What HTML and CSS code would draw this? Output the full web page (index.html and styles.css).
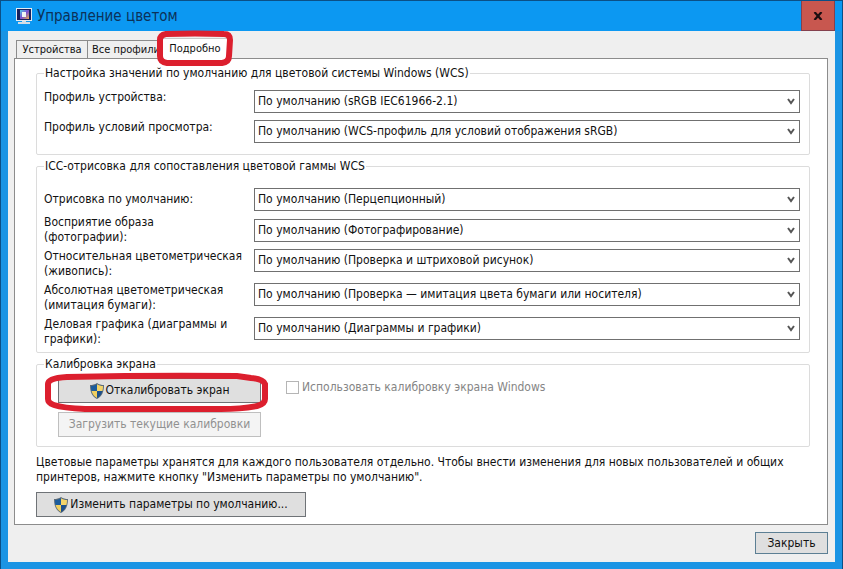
FILE: index.html
```html
<!DOCTYPE html>
<html lang="ru">
<head>
  <meta charset="UTF-8" />
  <title>Управление цветом</title>
  <meta name="viewport" content="width=device-width, initial-scale=1.0" />
  <link rel="stylesheet" href="styles.css">
</head>
<body>
  <!-- shield used by the admin buttons -->
  <svg class="defs" width="0" height="0" aria-hidden="true">
    <symbol id="shield" viewBox="0 0 14 16">
      <path d="M7 0C5 1.500 2.500 2 0 2c0 7 2 11.500 7 14 5-2.500 7-7 7-14-2.500 0-5-.5-7-2z" fill="#5b6b78"/>
      <path d="M7 1.200C5.200 2.400 3.200 2.900 1 3c0 2 .2 3.600.6 5H7z" fill="#1c5c9c"/>
      <path d="M7 1.200C8.800 2.400 10.800 2.900 13 3c0 2-.2 3.600-.6 5H7z" fill="#f3d469"/>
      <path d="M1.600 8c.9 3.300 2.600 5.500 5.400 7V8z" fill="#f0cf60"/>
      <path d="M12.400 8c-.9 3.300-2.600 5.500-5.400 7V8z" fill="#1b4f8c"/>
    </symbol>
  </svg>

  <div class="window">
    <header class="titlebar">
      <svg class="app-icon" width="16" height="16" viewBox="0 0 16 16" aria-hidden="true">
        <defs>
          <linearGradient id="screen" x1="0" y1="0" x2="1" y2="1">
            <stop offset="0" stop-color="#4fd0e8"/>
            <stop offset=".5" stop-color="#7a4fd0"/>
            <stop offset="1" stop-color="#e8b04a"/>
          </linearGradient>
        </defs>
        <rect x="0" y="0" width="16" height="13" fill="#e4eaf0"/>
        <rect x="1" y="1" width="14" height="11" fill="#17205c"/>
        <rect x="4" y="2" width="9" height="9" fill="url(#screen)"/>
        <rect x="6" y="4" width="4" height="5" fill="#eef6f4"/>
        <path d="M6 13h4v1h4v2H2v-2h4z" fill="#d3dde6"/>
      </svg>
      <h1 class="title">Управление цветом</h1>
      <button class="close-btn" type="button" aria-label="Закрыть окно">
        <svg width="10" height="8" viewBox="0 0 10 8"><path d="M1.500 0l7 8M8.500 0l-7 8" stroke="#1a0d10" stroke-width="2.200"/></svg>
      </button>
    </header>

    <main class="client">
      <div class="tabs" role="tablist">
        <button class="tab" type="button" role="tab">Устройства</button>
        <button class="tab tab-all" type="button" role="tab">Все профили</button>
        <div class="tab-mark">
          <button class="tab active" type="button" role="tab" aria-selected="true">Подробно</button>
          <svg class="ring" viewBox="0 0 76 35" preserveAspectRatio="none" aria-hidden="true">
            <path d="M9 3 Q38 2 67 3 Q73 3 73 9 L72 25 Q72 31 65 32 L10 32 Q3 31 3 25 L3 9 Q3 4 9 3z"/>
          </svg>
        </div>
      </div>

      <div class="panel">
        <fieldset class="group group-wcs">
          <legend>Настройка значений по умолчанию для цветовой системы Windows (WCS)</legend>
          <div class="row">
            <label for="device">Профиль устройства:</label>
            <select id="device"><option>По умолчанию (sRGB IEC61966-2.1)</option></select>
          </div>
          <div class="row">
            <label for="viewing">Профиль условий просмотра:</label>
            <select id="viewing"><option>По умолчанию (WCS-профиль для условий отображения sRGB)</option></select>
          </div>
        </fieldset>

        <fieldset class="group group-icc">
          <legend>ICC-отрисовка для сопоставления цветовой гаммы WCS</legend>
          <div class="row centered">
            <label for="default">Отрисовка по умолчанию:</label>
            <select id="default"><option>По умолчанию (Перцепционный)</option></select>
          </div>
          <div class="row centered">
            <label for="photo">Восприятие образа<br>(фотографии):</label>
            <select id="photo"><option>По умолчанию (Фотографирование)</option></select>
          </div>
          <div class="row">
            <label for="relative">Относительная цветометрическая<br>(живопись):</label>
            <select id="relative"><option>По умолчанию (Проверка и штриховой рисунок)</option></select>
          </div>
          <div class="row">
            <label for="absolute">Абсолютная цветометрическая<br>(имитация бумаги):</label>
            <select id="absolute"><option>По умолчанию (Проверка — имитация цвета бумаги или носителя)</option></select>
          </div>
          <div class="row">
            <label for="business">Деловая графика (диаграммы и<br>графики):</label>
            <select id="business"><option>По умолчанию (Диаграммы и графики)</option></select>
          </div>
        </fieldset>

        <fieldset class="group group-calibration">
          <legend>Калибровка экрана</legend>
          <div class="calibration">
            <div class="calibration-buttons">
              <div class="calibrate-mark">
                <button class="btn" type="button"><svg class="shield"><use href="#shield"/></svg>Откалибровать экран</button>
                <svg class="ring" viewBox="0 0 224 39" preserveAspectRatio="none" aria-hidden="true">
                  <path d="M22 4 Q110 2 192 3 L206 5 Q218 6 220 11 L220 26 Q220 31 212 33 Q196 36 176 36 L40 36 Q18 35 9 32 Q3 30 3 26 L3 11 Q3 5 22 4z"/>
                </svg>
              </div>
              <button class="btn" type="button" disabled>Загрузить текущие калибровки</button>
            </div>
            <label class="check"><input type="checkbox" disabled>Использовать калибровку экрана Windows</label>
          </div>
        </fieldset>

        <p class="note">Цветовые параметры хранятся для каждого пользователя отдельно. Чтобы внести изменения для новых пользователей и общих принтеров, нажмите кнопку "Изменить параметры по умолчанию".</p>
        <button class="btn btn-defaults" type="button"><svg class="shield"><use href="#shield"/></svg>Изменить параметры по умолчанию...</button>
      </div>

      <footer class="footer">
        <button class="btn btn-close" type="button">Закрыть</button>
      </footer>
    </main>
  </div>
</body>
</html>
```

FILE: styles.css
```css
* { box-sizing: border-box; }
body {
  margin: 0;
  background-color: #1a94e4;
  color: #111;
  font-family: "DejaVu Sans Condensed", "Noto Sans", sans-serif;
  font-size: 12px;
  line-height: 15px;
}
button, select, input { font: inherit; color: inherit; margin: 0; }
.defs { position: absolute; }

.window {
  display: flex;
  flex-direction: column;
  min-height: 100vh;
  padding: 0 7px 7px;
  border: 1px solid #0b4f86;
  background-color: #1a94e4;
}

/* title bar */
.titlebar {
  display: flex;
  align-items: center;
  height: 30px;
  margin: 0 -7px;
  padding: 0 7px 0 15px;
  background-color: #0c98f2;
}
.app-icon { flex: none; }
.title {
  flex: 1;
  margin: 0 0 0 5px;
  font-size: 15px;
  line-height: 20px;
  font-weight: normal;
  color: #0c3158;
}
.close-btn {
  display: flex;
  align-items: center;
  justify-content: center;
  align-self: stretch;
  width: 34px;
  padding: 0;
  border: 1px solid #84404e;
  border-top: none;
  background-color: #c8574f;
}

.client {
  flex: 1;
  display: flex;
  flex-direction: column;
  padding: 7px 7px 8px 6px;
  background-color: #efefef;
}

/* tabs */
.tabs {
  display: flex;
  align-items: flex-end;
  padding-left: 2px;
}
.tab {
  height: 18px;
  min-width: 72px;
  padding: 0 4px;
  border: 1px solid #8c8c8c;
  border-bottom: none;
  background-color: #efefef;
  font-size: 11px;
  white-space: nowrap;
}
.tab-all { border-left: none; padding: 0 4px; }
.tab-mark {
  position: relative;
  z-index: 1;
  margin: 0 0 -1px -4px;
}
.tab.active {
  display: block;
  height: 21px;
  min-width: 68px;
  padding: 0 4px 2px;
  border-color: #c8c8c8;
  background-color: #fff;
}
.ring {
  position: absolute;
  fill: none;
  stroke: #dc1f2e;
  stroke-width: 6px;
  pointer-events: none;
  overflow: visible;
}
.tab-mark .ring { left: -4px; top: -7px; width: 76px; height: 35px; }
.calibrate-mark .ring { left: -13px; top: -5px; width: 224px; height: 39px; }

.panel {
  flex: 1;
  padding: 7px 17px 7px 21px;
  border: 1px solid #8c8c8c;
  background-color: #fff;
}

/* groups */
.group {
  min-width: 0;
  margin: 0 0 4px;
  padding: 9px 9px 11px 7px;
  border: 1px solid #dcdcdc;
  border-radius: 2px;
}
.group legend { padding: 0 1px; }
.group-icc { padding-top: 14px; padding-bottom: 5px; }
.group-calibration { padding-top: 6px; padding-bottom: 9px; margin-bottom: 8px; }

.row {
  display: grid;
  grid-template-columns: 200px 1fr;
  column-gap: 10px;
  align-items: start;
}
.row label { white-space: nowrap; }
.row + .row { margin-top: 4px; }
.row.centered { align-items: center; }
.group-wcs .row + .row { margin-top: 7px; }

select {
  appearance: none;
  width: 100%;
  height: 23px;
  padding: 0 20px 0 3px;
  border: 1px solid #707070;
  border-radius: 0;
  background: #fff url("data:image/svg+xml,%3Csvg xmlns='http://www.w3.org/2000/svg' width='8' height='7'%3E%3Cpath d='M1 1l3 4 3-4' fill='none' stroke='%23555' stroke-width='2'/%3E%3C/svg%3E") no-repeat right 4px center;
}

/* calibration */
.calibration {
  display: flex;
  align-items: flex-start;
  gap: 25px;
  padding-left: 14px;
}
.calibration-buttons {
  display: flex;
  flex-direction: column;
  gap: 9px;
  width: 203px;
}
.calibrate-mark { position: relative; }
.btn {
  display: flex;
  align-items: center;
  justify-content: center;
  width: 100%;
  height: 25px;
  padding: 0;
  border: 1px solid #6f7377;
  background-color: #dfdfdf;
  white-space: nowrap;
}
.btn:disabled {
  border-color: #bfbfbf;
  background-color: #f4f4f4;
  color: #919191;
}
.shield { flex: none; width: 14px; height: 16px; margin-right: 2px; }
.check {
  display: flex;
  align-items: center;
  gap: 3px;
  padding-top: 2px;
  color: #858585;
}
.check input {
  appearance: none;
  width: 13px;
  height: 13px;
  border: 1px solid #b5b5b5;
  background-color: #fff;
}

.note { margin: 0 0 7px; max-width: 770px; }
.btn-defaults { width: 270px; }

.footer {
  display: flex;
  justify-content: flex-end;
  padding-top: 7px;
}
.btn-close {
  width: 73px;
  height: 22px;
  border-color: #5c7f94;
}
```
